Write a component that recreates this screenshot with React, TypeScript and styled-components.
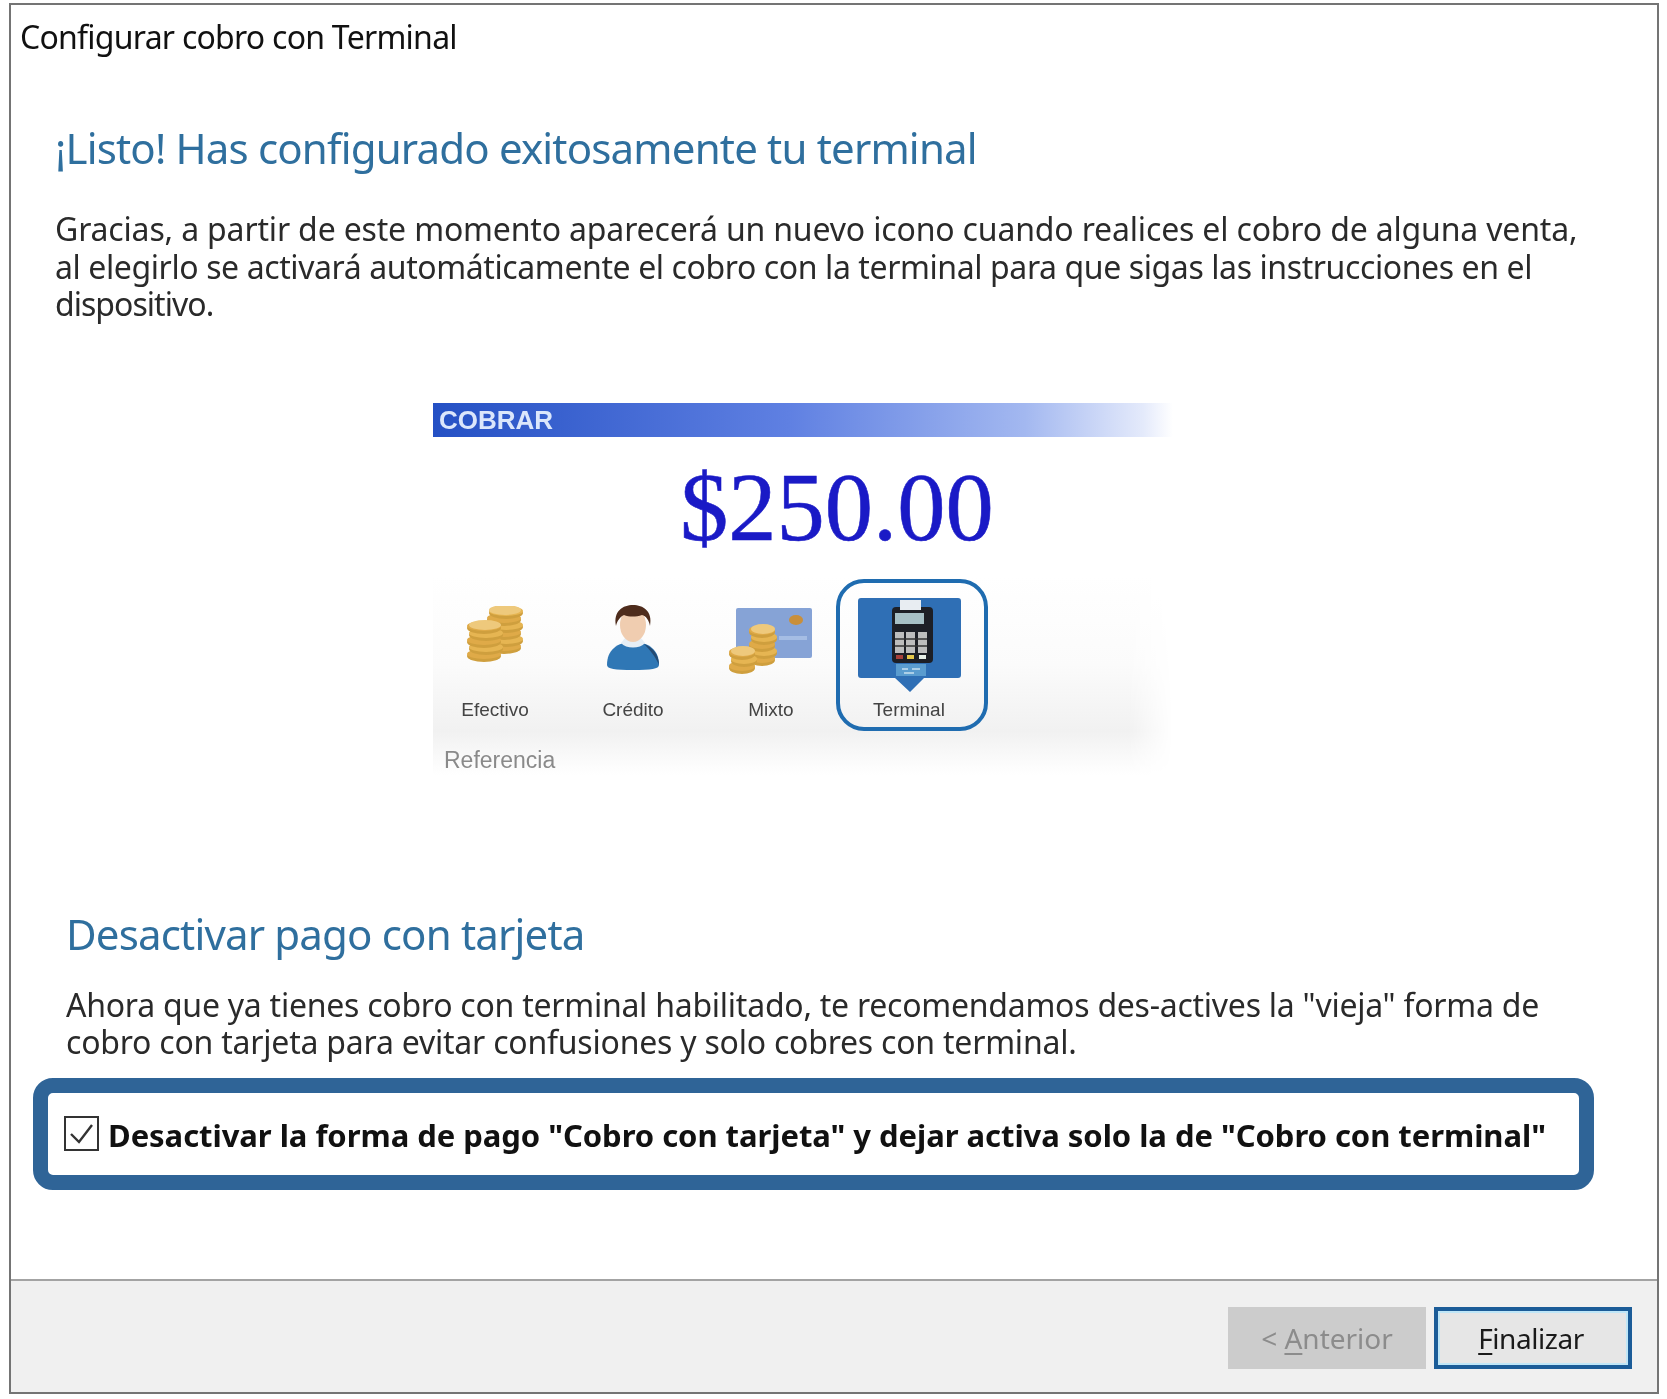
import React from 'react'
import styled, { createGlobalStyle } from 'styled-components'

const GlobalStyle = createGlobalStyle`
  html, body {
    margin: 0;
    padding: 0;
    background: #fff;
  }
  body {
    font-family: 'Noto Sans', 'Open Sans', sans-serif;
    color: #1a1a1a;
  }
`

const Page = styled.div`
  box-sizing: border-box;
  height: 1399px;
  padding: 3px 8px 5px 9px;
  background: #fff;
`

const Win = styled.div`
  box-sizing: border-box;
  height: 100%;
  display: flex;
  flex-direction: column;
  border: 2px solid #747474;
  filter: blur(0.5px);
`

const Content = styled.div`
  flex: 1;
  padding: 12px 0 0 0;
`

const WinTitle = styled.div`
  font-size: 32px;
  line-height: 40px;
  padding-left: 9px;
  color: #111;
  letter-spacing: -0.75px;
`

const Section = styled.section<{ $indent: number }>`
  padding-left: ${({ $indent }) => $indent}px;
`

const Heading = styled.h2<{ $top: number }>`
  margin: ${({ $top }) => $top}px 0 0;
  font-size: 42px;
  line-height: 50px;
  font-weight: 400;
  color: #2f6f9e;
  letter-spacing: -0.82px;
`

const Body = styled.p<{ $top: number }>`
  margin: ${({ $top }) => $top}px 0 0;
  font-size: 32px;
  line-height: 37.5px;
  color: #2a2a2a;
  white-space: nowrap;
`

const Line = styled.span<{ $spacing: number }>`
  display: block;
  letter-spacing: ${({ $spacing }) => $spacing}px;
`

const Illustration = styled.div`
  width: 740px;
  margin: 80px 0 0 422px;
  font-family: 'Liberation Sans', Arial, sans-serif;
`

const Bar = styled.div`
  height: 34px;
  line-height: 35px;
  padding-left: 6px;
  font-size: 26px;
  font-weight: 700;
  color: #dbe6fb;
  background: linear-gradient(90deg, #2450c4 0%, #5f80e2 48%, #a3b8f0 80%, #e4eafb 96%, #ffffff 100%);
`

const Amount = styled.div`
  margin-top: 21px;
  padding-left: 247px;
  font-family: 'Liberation Serif', 'Times New Roman', serif;
  font-size: 96.5px;
  line-height: 100px;
  color: #1a1ac6;
  -webkit-text-stroke: 0.6px #1a1ac6;
`

const Strip = styled.div`
  height: 200px;
  margin-top: 17px;
  background: linear-gradient(180deg, #ffffff 0%, #fbfbfb 45%, #f1f1f1 78%, #ffffff 100%);
  mask-image: linear-gradient(90deg, #000 94%, transparent 100%);
`

const Tiles = styled.div`
  display: flex;
  gap: 16px;
  margin-left: 1px;
`

const Tile = styled.div<{ $selected?: boolean }>`
  position: relative;
  width: 122px;
  height: 156px;
  display: flex;
  flex-direction: column;
  align-items: center;

  ${({ $selected }) =>
    $selected &&
    `
    &::after {
      content: '';
      position: absolute;
      inset: 4px -18px 0 -12px;
      border: 4px solid #1f6cb0;
      border-radius: 28px;
    }
  `}
`

const IconSlot = styled.div<{ $top: number }>`
  box-sizing: border-box;
  height: 124px;
  padding-top: ${({ $top }) => $top}px;
  display: flex;
  align-items: flex-start;
  justify-content: center;
  filter: blur(0.7px);
`

const TileLabel = styled.span`
  font-size: 19px;
  line-height: 22px;
  color: #444;
  white-space: nowrap;
  filter: blur(0.4px);
`

const Reference = styled.div`
  padding: 16px 0 0 11px;
  font-size: 23px;
  line-height: 26px;
  color: #8a8a8a;
  filter: blur(0.4px);
`

const Highlight = styled.div`
  box-sizing: border-box;
  height: 112px;
  width: 1561px;
  margin: 17px 0 0 22px;
  padding-left: 16px;
  display: flex;
  align-items: center;
  gap: 9px;
  border: 15px solid #2f6497;
  border-radius: 20px;
  background: #fff;
`

const CheckBox = styled.span`
  box-sizing: border-box;
  width: 35px;
  height: 35px;
  flex: none;
  display: flex;
  border: 2px solid #333;
  background: #fff;
`

const CheckLabel = styled.span`
  padding-top: 2px;
  font-size: 31px;
  font-weight: 700;
  line-height: 40px;
  letter-spacing: -0.05px;
  color: #111;
  white-space: nowrap;
`

const Footer = styled.div`
  height: 113px;
  flex: none;
  box-sizing: border-box;
  border-top: 2px solid #a3a3a3;
  padding: 26px 25px 0 0;
  display: flex;
  justify-content: flex-end;
  gap: 8px;
  background: #f0f0f0;
`

const WizardButton = styled.button<{ $primary?: boolean }>`
  box-sizing: border-box;
  width: 198px;
  height: 62px;
  padding: 0 ${({ $primary }) => ($primary ? '4px' : '0')} 0 0;
  font-family: inherit;
  font-size: 28px;
  letter-spacing: ${({ $primary }) => ($primary ? '-0.45px' : '0')};
  color: ${({ $primary }) => ($primary ? '#1a1a1a' : '#8c8c8c')};
  background: ${({ $primary }) => ($primary ? '#e6e6e6' : '#cccccc')};
  border: ${({ $primary }) => ($primary ? '4px solid #1b5c98' : '1px solid #cccccc')};
  box-shadow: ${({ $primary }) => ($primary ? 'inset 0 0 0 2px #bfe6f7' : 'none')};

  u {
    text-underline-offset: 4px;
  }
`

// one stack of coins, drawn bottom up
const CoinStack = ({ x, bottom, count, rx }: { x: number; bottom: number; count: number; rx: number }) => (
  <>
    {Array.from({ length: count }).map((_, i) => (
      <g key={i}>
        <ellipse cx={x + (i % 2 ? 1 : -1)} cy={bottom - i * 7} rx={rx} ry={6} fill="#cf9f3e" />
        <ellipse cx={x + (i % 2 ? 1 : -1)} cy={bottom - i * 7 - 2} rx={rx} ry={5} fill={i % 2 ? '#e6b552' : '#dfaa48'} />
      </g>
    ))}
    <ellipse cx={x} cy={bottom - (count - 1) * 7 - 3} rx={rx - 1} ry={5} fill="#eec97c" />
  </>
)

const Coins = () => (
  <svg width="58" height="58" viewBox="0 0 58 58">
    <CoinStack x={39} bottom={42} count={6} rx={17} />
    <CoinStack x={19} bottom={50} count={5} rx={17} />
  </svg>
)

const Person = () => (
  <svg width="54" height="66" viewBox="0 0 54 66">
    <path d="M1 60c0-15 10-23 26-23s26 8 26 23c0 4-8 5-26 5S1 64 1 60z" fill="#2f77b5" />
    <path d="M38 39c8 3 15 10 15 21-4-9-9-15-15-21z" fill="#234a73" />
    <path d="M15 38c5 6 19 6 24 0l-4-5H19z" fill="#e6eef5" />
    <ellipse cx="27" cy="20" rx="13" ry="17" fill="#f0cdb0" />
    <path d="M10 21C7 6 17 0 27 0s20 6 17 21c-1-6-4-10-8-11-6 2-13 2-18 0-4 2-7 6-8 11z" fill="#4e2c1c" />
  </svg>
)

const CardCoins = () => (
  <svg width="84" height="68" viewBox="0 0 84 68">
    <rect x="7" y="0" width="76" height="50" rx="2" fill="#86a3d6" />
    <ellipse cx="67" cy="12" rx="7" ry="5" fill="#c98f3a" />
    <rect x="50" y="28" width="28" height="4" fill="#a5bde4" />
    <CoinStack x={34} bottom={52} count={5} rx={13} />
    <CoinStack x={14} bottom={60} count={3} rx={13} />
  </svg>
)

const TerminalIcon = () => (
  <svg width="103" height="94" viewBox="0 0 103 94">
    <path d="M3 0h97a3 3 0 0 1 3 3v74a3 3 0 0 1-3 3H66L52 94 37 80H3a3 3 0 0 1-3-3V3a3 3 0 0 1 3-3z" fill="#2f6fb5" />
    <rect x="34" y="9" width="41" height="56" rx="4" fill="#1d1f26" />
    <rect x="42" y="2" width="21" height="10" fill="#e8edf2" />
    <rect x="37" y="15" width="29" height="11" fill="#a7c0c6" />
    <rect x="37" y="34" width="9" height="21" fill="#bdbdbd" />
    <rect x="48" y="34" width="9" height="21" fill="#bdbdbd" />
    <rect x="60" y="34" width="9" height="21" fill="#bdbdbd" />
    <path d="M37 41h32M37 48h32" stroke="#333" strokeWidth="1.6" />
    <rect x="38" y="57" width="7" height="4" fill="#a8403a" />
    <rect x="49" y="57" width="7" height="4" fill="#e6c84a" />
    <rect x="61" y="57" width="7" height="4" fill="#e8f0e8" />
    <path d="M38 66h30v12H38z" fill="#5a9ccf" />
    <path d="M44 71h6M54 71h8M46 75h10" stroke="#c8e0f0" strokeWidth="1.4" />
  </svg>
)

const Check = () => (
  <svg width="31" height="31" viewBox="0 0 31 31">
    <path d="M5 16l8 8L26 7" fill="none" stroke="#333" strokeWidth="2.4" />
  </svg>
)

const App = () => (
  <>
    <GlobalStyle />
    <Page>
      <Win>
        <Content>
          <WinTitle>Configurar cobro con Terminal</WinTitle>

          <Section $indent={44}>
            <Heading $top={66}>¡Listo! Has configurado exitosamente tu terminal</Heading>
            <Body $top={37}>
              <Line $spacing={-0.165}>
                Gracias, a partir de este momento aparecerá un nuevo icono cuando realices el cobro de alguna venta,
              </Line>
              <Line $spacing={-0.4}>
                al elegirlo se activará automáticamente el cobro con la terminal para que sigas las instrucciones en el
              </Line>
              <Line $spacing={-0.97}>dispositivo.</Line>
            </Body>
          </Section>

          <Illustration>
            <Bar>COBRAR</Bar>
            <Amount>$250.00</Amount>
            <Strip>
              <Tiles>
                <Tile>
                  <IconSlot $top={31}><Coins /></IconSlot>
                  <TileLabel>Efectivo</TileLabel>
                </Tile>
                <Tile>
                  <IconSlot $top={30}><Person /></IconSlot>
                  <TileLabel>Crédito</TileLabel>
                </Tile>
                <Tile>
                  <IconSlot $top={33}><CardCoins /></IconSlot>
                  <TileLabel>Mixto</TileLabel>
                </Tile>
                <Tile $selected>
                  <IconSlot $top={23}><TerminalIcon /></IconSlot>
                  <TileLabel>Terminal</TileLabel>
                </Tile>
              </Tiles>
              <Reference>Referencia</Reference>
            </Strip>
          </Illustration>

          <Section $indent={55}>
            <Heading $top={134}>Desactivar pago con tarjeta</Heading>
            <Body $top={27}>
              <Line $spacing={-0.25}>
                Ahora que ya tienes cobro con terminal habilitado, te recomendamos des-actives la "vieja" forma de
              </Line>
              <Line $spacing={-0.22}>cobro con tarjeta para evitar confusiones y solo cobres con terminal.</Line>
            </Body>
          </Section>

          <Highlight>
            <CheckBox><Check /></CheckBox>
            <CheckLabel>Desactivar la forma de pago "Cobro con tarjeta" y dejar activa solo la de "Cobro con terminal"</CheckLabel>
          </Highlight>
        </Content>

        <Footer>
          <WizardButton disabled>&lt; <u>A</u>nterior</WizardButton>
          <WizardButton $primary><u>F</u>inalizar</WizardButton>
        </Footer>
      </Win>
    </Page>
  </>
)

export default App
